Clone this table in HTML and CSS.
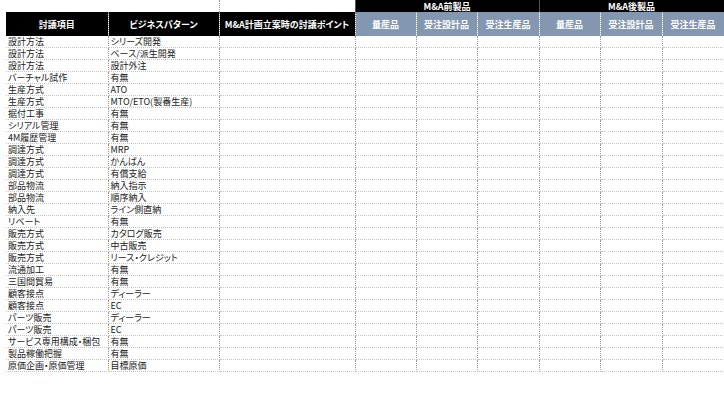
FILE: index.html
```html
<!DOCTYPE html>
<html lang="ja">
<head>
<meta charset="utf-8">
<link rel="stylesheet" href="styles.css">
</head>
<body>
<table class="sheet">
  <colgroup>
    <col class="c-item"><col class="c-pat"><col class="c-point">
    <col class="c-q"><col class="c-q"><col class="c-q2"><col class="c-q"><col class="c-q2"><col class="c-q2">
  </colgroup>
  <thead>
    <tr class="group-row">
      <th class="blank"></th>
      <th class="blank gap"></th>
      <th class="blank"></th>
      <th class="group" colspan="3">M&amp;A前製品</th>
      <th class="group" colspan="3">M&amp;A後製品</th>
    </tr>
    <tr class="head-row">
      <th class="dark">討議項目</th>
      <th class="dark">ビジネスパターン</th>
      <th class="dark">M&amp;A計画立案時の討議ポイント</th>
      <th class="blue">量産品</th>
      <th class="blue">受注設計品</th>
      <th class="blue">受注生産品</th>
      <th class="blue">量産品</th>
      <th class="blue">受注設計品</th>
      <th class="blue">受注生産品</th>
    </tr>
  </thead>
  <tbody>
    <tr><td>設計方法</td><td>シリーズ開発</td><td></td><td></td><td></td><td></td><td></td><td></td><td></td></tr>
    <tr><td>設計方法</td><td>ベース/派生開発</td><td></td><td></td><td></td><td></td><td></td><td></td><td></td></tr>
    <tr><td>設計方法</td><td>設計外注</td><td></td><td></td><td></td><td></td><td></td><td></td><td></td></tr>
    <tr><td>バーチャル試作</td><td>有無</td><td></td><td></td><td></td><td></td><td></td><td></td><td></td></tr>
    <tr><td>生産方式</td><td>ATO</td><td></td><td></td><td></td><td></td><td></td><td></td><td></td></tr>
    <tr><td>生産方式</td><td>MTO/ETO(製番生産)</td><td></td><td></td><td></td><td></td><td></td><td></td><td></td></tr>
    <tr><td>据付工事</td><td>有無</td><td></td><td></td><td></td><td></td><td></td><td></td><td></td></tr>
    <tr><td>シリアル管理</td><td>有無</td><td></td><td></td><td></td><td></td><td></td><td></td><td></td></tr>
    <tr><td>4M履歴管理</td><td>有無</td><td></td><td></td><td></td><td></td><td></td><td></td><td></td></tr>
    <tr><td>調達方式</td><td>MRP</td><td></td><td></td><td></td><td></td><td></td><td></td><td></td></tr>
    <tr><td>調達方式</td><td>かんばん</td><td></td><td></td><td></td><td></td><td></td><td></td><td></td></tr>
    <tr><td>調達方式</td><td>有償支給</td><td></td><td></td><td></td><td></td><td></td><td></td><td></td></tr>
    <tr><td>部品物流</td><td>納入指示</td><td></td><td></td><td></td><td></td><td></td><td></td><td></td></tr>
    <tr><td>部品物流</td><td>順序納入</td><td></td><td></td><td></td><td></td><td></td><td></td><td></td></tr>
    <tr><td>納入先</td><td>ライン側直納</td><td></td><td></td><td></td><td></td><td></td><td></td><td></td></tr>
    <tr><td>リベート</td><td>有無</td><td></td><td></td><td></td><td></td><td></td><td></td><td></td></tr>
    <tr><td>販売方式</td><td>カタログ販売</td><td></td><td></td><td></td><td></td><td></td><td></td><td></td></tr>
    <tr><td>販売方式</td><td>中古販売</td><td></td><td></td><td></td><td></td><td></td><td></td><td></td></tr>
    <tr><td>販売方式</td><td>リース・クレジット</td><td></td><td></td><td></td><td></td><td></td><td></td><td></td></tr>
    <tr><td>流通加工</td><td>有無</td><td></td><td></td><td></td><td></td><td></td><td></td><td></td></tr>
    <tr><td>三国間貿易</td><td>有無</td><td></td><td></td><td></td><td></td><td></td><td></td><td></td></tr>
    <tr><td>顧客接点</td><td>ディーラー</td><td></td><td></td><td></td><td></td><td></td><td></td><td></td></tr>
    <tr><td>顧客接点</td><td>EC</td><td></td><td></td><td></td><td></td><td></td><td></td><td></td></tr>
    <tr><td>パーツ販売</td><td>ディーラー</td><td></td><td></td><td></td><td></td><td></td><td></td><td></td></tr>
    <tr><td>パーツ販売</td><td>EC</td><td></td><td></td><td></td><td></td><td></td><td></td><td></td></tr>
    <tr><td>サービス専用構成・梱包</td><td>有無</td><td></td><td></td><td></td><td></td><td></td><td></td><td></td></tr>
    <tr><td>製品稼働把握</td><td>有無</td><td></td><td></td><td></td><td></td><td></td><td></td><td></td></tr>
    <tr><td>原価企画・原価管理</td><td>目標原価</td><td></td><td></td><td></td><td></td><td></td><td></td><td></td></tr>
  </tbody>
</table>
</body>
</html>
```

FILE: styles.css
```css
html, body {
  margin: 0;
  padding: 0;
  background: #ffffff;
}

body {
  padding-left: 6px;
  font-family: "Noto Sans CJK JP", "Noto Sans", sans-serif;
  font-feature-settings: "palt";
  color: #1a1a1a;
}

.sheet {
  border-collapse: collapse;
  table-layout: fixed;
  width: 718px;
  font-size: 9px;
}

.c-item { width: 102px; }
.c-pat { width: 111px; }
.c-point { width: 136px; }
.c-q { width: 61px; }
.c-q2 { width: 62px; }

.sheet th, .sheet td {
  padding: 0;
  overflow: hidden;
  white-space: nowrap;
}

.group-row th {
  height: 12px;
  line-height: 11px;
}

.blank {
  background: #ffffff;
}

.blank.gap {
  border-right: 1px dotted #999999;
}

.group {
  background: #000000;
  color: #ffffff;
  font-weight: bold;
  text-align: center;
  border-left: 1px solid #555555;
  border-right: 1px solid #555555;
}

.head-row th {
  height: 24px;
  font-weight: bold;
  color: #ffffff;
  text-align: center;
  vertical-align: middle;
}

.dark {
  background: #000000;
  border-right: 1px dotted #777777;
}

.blue {
  background: #8497b0;
  border-right: 1px dotted #b4c0d0;
}

.sheet tbody td {
  height: 11px;
  line-height: 11px;
  padding-left: 2px;
  border-bottom: 1px dotted #c4c4c4;
  border-right: 1px dotted #999999;
}
```
